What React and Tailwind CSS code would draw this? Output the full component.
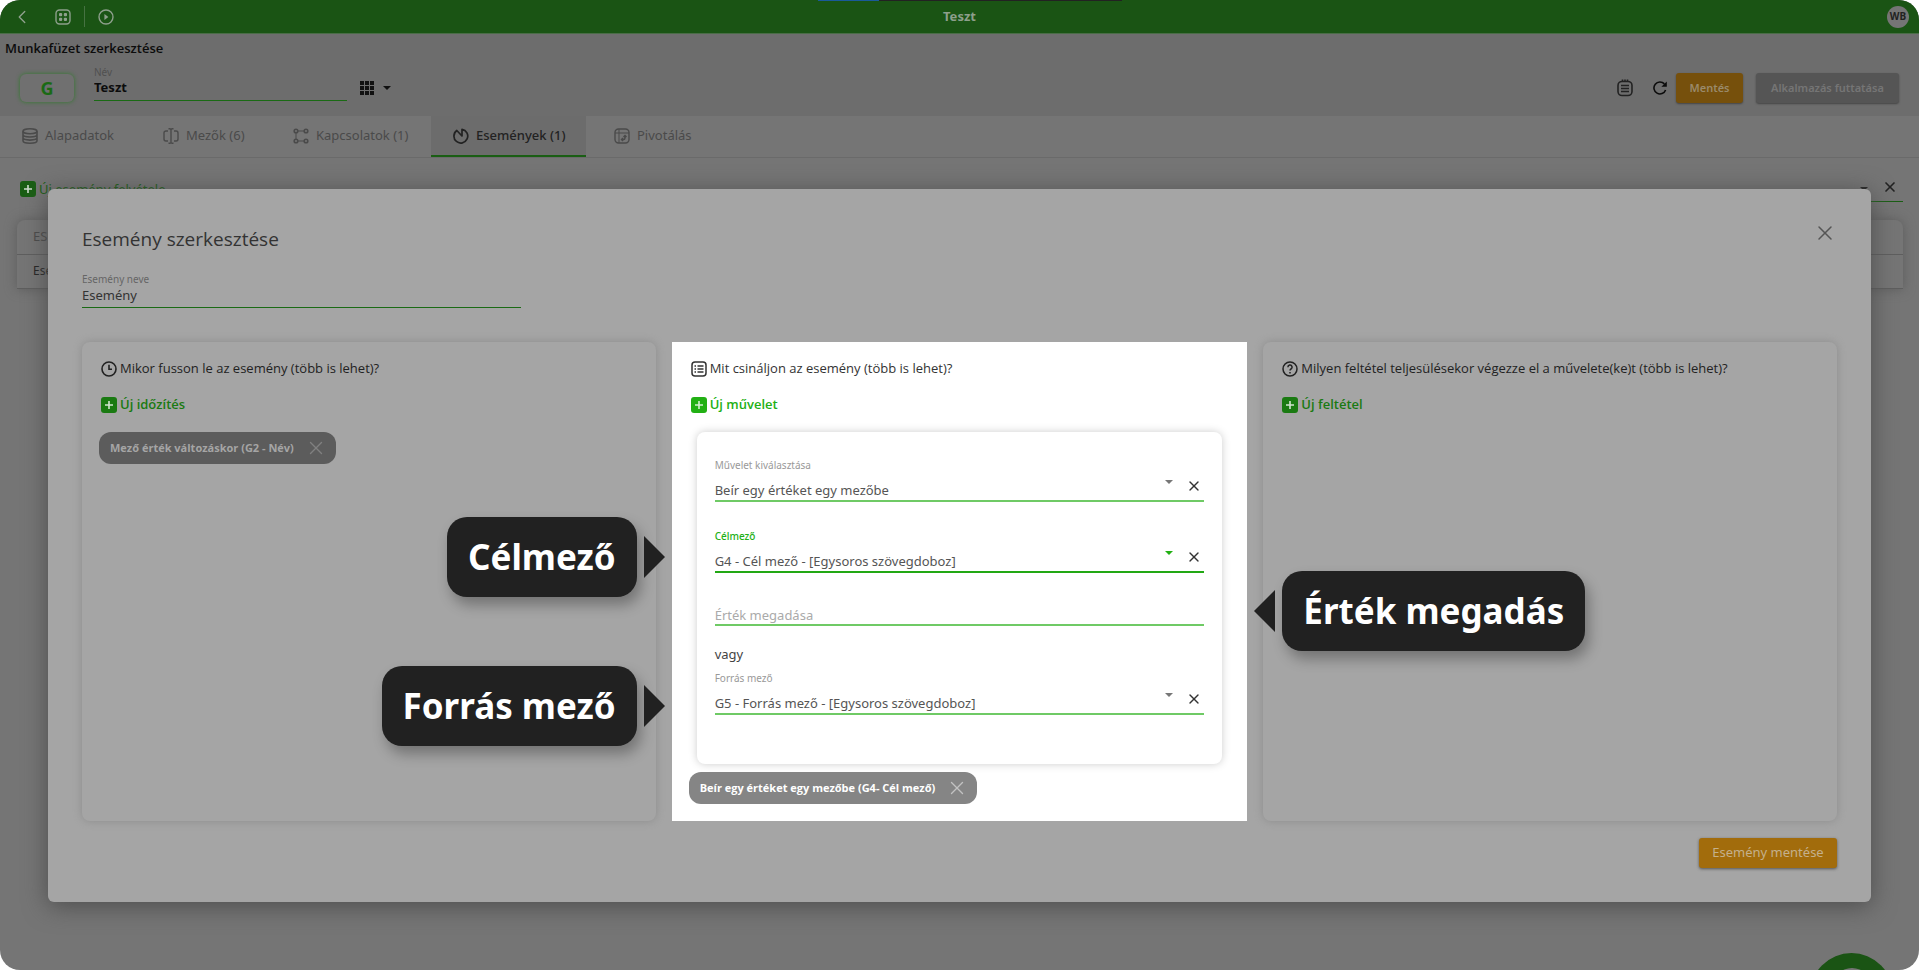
import { ChevronLeft, X } from 'lucide-react'
import clsx from 'clsx'

const BoardIcon = () => (
  <svg width="16" height="16" viewBox="0 0 16 16" fill="none" stroke="currentColor">
    <rect x="1" y="1" width="14" height="14" rx="3.5" strokeWidth="1.4" />
    <g fill="currentColor" stroke="none">
      <rect x="4" y="4" width="3.2" height="3.2" rx="1" />
      <rect x="8.8" y="4" width="3.2" height="3.2" rx="1" />
      <rect x="4" y="8.8" width="3.2" height="3.2" rx="1" />
      <rect x="8.8" y="8.8" width="3.2" height="3.2" rx="1" />
    </g>
  </svg>
)

const PlayIcon = () => (
  <svg width="16" height="16" viewBox="0 0 16 16" fill="none" stroke="currentColor">
    <circle cx="8" cy="8" r="7" strokeWidth="1.4" />
    <path d="M6.4 5l4 3-4 3z" fill="currentColor" stroke="none" />
  </svg>
)

const GridIcon = () => (
  <svg width="14" height="14" viewBox="0 0 14 14" fill="currentColor">
    {[0, 5, 10].map((y) =>
      [0, 5, 10].map((x) => <rect key={`${x}-${y}`} x={x} y={y} width="4" height="4" />)
    )}
  </svg>
)

const Caret = ({ className }) => (
  <svg width="8" height="4" viewBox="0 0 8 4" fill="currentColor" className={clsx('shrink-0', className)}>
    <path d="M0 0h8L4 4z" />
  </svg>
)

const NotepadIcon = () => (
  <svg width="16" height="18" viewBox="0 0 16 18" fill="none" stroke="currentColor" strokeWidth="1.6">
    <rect x="1" y="2.5" width="14" height="14" rx="4" />
    <path d="M4 6.5h8M4 9.5h8M4 12.5h8M5.5 .5v2M8 .5v2M10.5 .5v2" />
  </svg>
)

const RefreshIcon = () => (
  <svg width="14" height="14" viewBox="0 0 14 14" fill="none" stroke="currentColor" strokeWidth="1.6">
    <path d="M12.6 9A6 6 0 1 1 11.4 2.9" />
    <path d="M13.8 .4v5.4H8.4z" fill="currentColor" stroke="none" />
  </svg>
)

const DatabaseIcon = () => (
  <svg width="16" height="16" viewBox="0 0 16 16" fill="none" stroke="currentColor" strokeWidth="1.6">
    <ellipse cx="8" cy="3.3" rx="7" ry="2.5" />
    <path d="M1 3.3v9.4c0 1.4 3 2.5 7 2.5s7-1.1 7-2.5V3.3M1 6.5C1 7.9 4 9 8 9s7-1.1 7-2.5M1 9.6c0 1.4 3 2.5 7 2.5s7-1.1 7-2.5" />
  </svg>
)

const FieldsIcon = () => (
  <svg width="16" height="16" viewBox="0 0 16 16" fill="none" stroke="currentColor" strokeWidth="1.4">
    <path d="M5 3H3a2 2 0 0 0-2 2v6a2 2 0 0 0 2 2h2M11 3h2a2 2 0 0 1 2 2v6a2 2 0 0 1-2 2h-2M8 1v14M5.5 .7H7l1 .8 1-.8h1.5M5.5 15.3H7l1-.8 1 .8h1.5" />
  </svg>
)

const RelationsIcon = () => (
  <svg width="16" height="16" viewBox="0 0 16 16" fill="none" stroke="currentColor" strokeWidth="1.6">
    <circle cx="3" cy="3" r="1.8" />
    <circle cx="13" cy="3" r="1.8" />
    <circle cx="3" cy="13" r="1.8" />
    <circle cx="13" cy="13" r="1.8" />
    <path d="M5 3h6M5 13h6M3 5v6" strokeWidth="1" />
  </svg>
)

const EventIcon = () => (
  <svg width="16" height="16" viewBox="0 0 16 16" fill="none" stroke="currentColor" strokeWidth="1.7" strokeLinejoin="round">
    <path d="M9 8V1.300a6.900 6.900 0 1 1-5.200 1.200z" />
  </svg>
)

const PivotIcon = () => (
  <svg width="16" height="16" viewBox="0 0 16 16" fill="none" stroke="currentColor" strokeWidth="1.4">
    <rect x="1" y="1" width="14" height="14" rx="3.5" />
    <path d="M1 5h14M5 1v14" strokeWidth="1" />
    <path d="M7.5 11.5h2A1.5 1.5 0 0 0 11 10V7.5M9.5 9L11 7.5 12.5 9M9 10l-1.500 1.500L9 13" />
  </svg>
)

const PlusIcon = () => (
  <svg width="16" height="16" viewBox="0 0 16 16" fill="none" className="shrink-0">
    <rect width="16" height="16" rx="3" fill="currentColor" />
    <path d="M8 4v8M4 8h8" stroke="#fff" strokeOpacity="0.8" strokeWidth="1.6" />
  </svg>
)

const ClockIcon = () => (
  <svg width="16" height="16" viewBox="0 0 16 16" fill="none" stroke="currentColor" strokeWidth="1.6">
    <circle cx="8" cy="8" r="7" />
    <path d="M8 3.8V8.3h3" />
  </svg>
)

const ListIcon = () => (
  <svg width="16" height="16" viewBox="0 0 16 16" fill="none" stroke="currentColor" strokeWidth="1.5">
    <rect x="1" y="1" width="14" height="14" rx="3" />
    <path d="M3.5 5H5M6.5 5h6M3.5 8H5M6.5 8h6M3.5 11H5M6.5 11h6" />
  </svg>
)

const QuestionIcon = () => (
  <svg width="16" height="16" viewBox="0 0 16 16" fill="none" stroke="currentColor" strokeWidth="1.5">
    <circle cx="8" cy="8" r="7" />
    <path d="M5.9 6.2a2.1 2.1 0 1 1 3.1 1.8c-.7.4-1 .8-1 1.6M8 11v1.4" />
  </svg>
)

const tabs = [
  { label: 'Alapadatok', icon: DatabaseIcon, width: 'w-[141px]' },
  { label: 'Mezők (6)', icon: FieldsIcon, width: 'w-[130px]' },
  { label: 'Kapcsolatok (1)', icon: RelationsIcon, width: 'w-[160px]' },
  { label: 'Események (1)', icon: EventIcon, width: 'w-[155px]', active: true },
  { label: 'Pivotálás', icon: PivotIcon, width: 'w-[155px]' }
]

const Header = () => (
  <header className="flex h-[34px] items-center border-b border-[#4a6d47] bg-[#1a5414] text-[#8d9f8b]">
    <div className="flex flex-1 items-center">
      <button type="button" aria-label="Vissza" className="ml-[11px] flex w-11">
        <ChevronLeft size={22} strokeWidth={1.5} />
      </button>
      <button type="button" aria-label="Alkalmazások">
        <BoardIcon />
      </button>
      <span className="mx-[13px] h-[21px] w-px bg-[#467242]" />
      <button type="button" aria-label="Futtatás">
        <PlayIcon />
      </button>
    </div>
    <h1 className="text-[13px] font-bold">Teszt</h1>
    <div className="flex flex-1 justify-end">
      <button type="button" className="mr-[10px] h-[22px] w-[22px] rounded-full bg-[#757575] text-[10px] font-bold text-[#222]">
        WB
      </button>
    </div>
  </header>
)

const Toolbar = () => (
  <section className="h-[82px] bg-[#6d6d6d]">
    <h2 className="pt-1 pl-[5px] font-['Open_Sans',sans-serif] text-[13px] leading-5 font-semibold text-[#0c0c0c]">
      Munkafüzet szerkesztése
    </h2>
    <div className="mt-2 flex h-11 items-center px-5">
      <span className="flex h-7 w-[54px] items-center justify-center rounded-md bg-[#707070] text-lg font-bold text-[#1a6a14] shadow-[0_0_4px_#2f7a2a]">
        G
      </span>
      <div className="ml-5 w-[253px] self-start border-b border-[#1a6a14]">
        <label htmlFor="workbook" className="block text-[10px] leading-3 text-[#505050]">
          Név
        </label>
        <input
          id="workbook"
          defaultValue="Teszt"
          className="block h-[22px] w-full pb-1 text-[13px] font-bold text-[#0c0c0c] outline-none"
        />
      </div>
      <button type="button" aria-label="Nézet" className="ml-[13px] flex items-center gap-[9px] text-[#111]">
        <GridIcon />
        <Caret />
      </button>
      <div className="ml-auto flex items-center">
        <button type="button" aria-label="Napló" className="text-[#222]">
          <NotepadIcon />
        </button>
        <button type="button" aria-label="Frissítés" className="mr-[9px] ml-5 text-[#0c0c0c]">
          <RefreshIcon />
        </button>
        <button type="button" className="h-[30px] w-[67px] rounded-[3px] bg-[#76500c] text-[11px] font-semibold text-[#9a8a6a] shadow-[0_1px_2px_#444]">
          Mentés
        </button>
        <button type="button" className="ml-[13px] h-[30px] w-[143px] rounded-[3px] bg-[#555] text-[11px] font-semibold text-[#757575] shadow-[0_1px_2px_#444]">
          Alkalmazás futtatása
        </button>
      </div>
    </div>
  </section>
)

const Tabs = () => (
  <nav className="flex h-[42px] border-b border-[#6a6a6a] bg-[#757575]">
    {tabs.map(({ label, icon: Icon, width, active }) => (
      <button
        key={label}
        type="button"
        className={clsx(
          'flex items-center gap-[7px] border-b-2 pl-[22px] text-[13px] whitespace-nowrap',
          width,
          active ? 'mr-[6px] border-[#1a5e14] bg-[#6c6c6c] font-medium text-[#222]' : 'border-transparent text-[#4a4a4a]'
        )}
      >
        <Icon />
        {label}
      </button>
    ))}
  </nav>
)

const EventTable = () => (
  <section className="pt-[23px] pr-4 pl-[17px]">
    <div className="flex h-[21px] items-start justify-between">
      <button type="button" className="ml-[3px] flex h-4 items-center gap-[3px] text-[13px] leading-4 text-[#1a5e14]">
        <PlusIcon />
        Új esemény felvétele
      </button>
      <div className="flex h-[21px] w-60 items-start justify-end gap-4 border-b border-[#1a5e14] pr-[7px] text-[#222]">
        <Caret className="mt-[6px]" />
        <button type="button" aria-label="Szűrő törlése">
          <X size={16} strokeWidth={2.5} className="-m-0.5" />
        </button>
      </div>
    </div>
    <table className="mt-[18px] w-full rounded-t-lg text-left text-[13px] shadow-[0_0_12px_#5c5c5c]">
      <thead>
        <tr className="h-[34px] border-b border-[#5e5e5e] text-[#4a4a4a]">
          <th className="pl-4 font-normal">ESEMÉNY NEVE</th>
        </tr>
      </thead>
      <tbody>
        <tr className="h-[34px] border-b border-[#5e5e5e] text-xs text-[#222]">
          <td className="pl-4">Esemény</td>
        </tr>
      </tbody>
    </table>
  </section>
)

const SelectField = ({ id, label, value, focused, line }) => (
  <div className={clsx('border-b-2', line)}>
    <label
      htmlFor={id}
      className={clsx('block text-[10px] leading-[14px]', focused ? 'font-medium text-[#22b014]' : 'text-[#999]')}
    >
      {label}
    </label>
    <div className="mt-2 flex h-5 items-start pr-1">
      <select id={id} className="h-5 flex-1 appearance-none text-[13px] leading-5 text-[#555] outline-none">
        <option>{value}</option>
      </select>
      <Caret className={focused ? 'text-[#22b014]' : 'text-[#777]'} />
      <button type="button" aria-label={`${label} törlése`} className="ml-[15px] text-[#333]">
        <X size={16} strokeWidth={2} className="-m-0.5" />
      </button>
    </div>
  </div>
)

const Chip = ({ children, className }) => (
  <span
    className={clsx(
      "flex h-8 w-fit items-center gap-[13px] rounded-xl px-[11px] font-['Open_Sans',sans-serif] text-[11px] font-bold",
      className
    )}
  >
    {children}
    <button type="button" aria-label="Eltávolítás" className="opacity-50">
      <X size={22} strokeWidth={1.5} className="-mx-0.5" />
    </button>
  </span>
)

const Column = ({ icon: Icon, title, action, highlighted, children }) => (
  <section
    className={clsx(
      'relative flex min-h-[479px] flex-col p-[17px]',
      highlighted ? '-mx-px bg-white' : 'rounded-lg shadow-[0_0_8px_#8c8c8c]'
    )}
  >
    <h3
      className={clsx(
        "flex h-5 items-center gap-[3px] pl-0.5 font-['Open_Sans',sans-serif] text-[13px] font-medium whitespace-nowrap",
        highlighted ? 'text-[#333]' : 'text-[#222]'
      )}
    >
      <Icon />
      {title}
    </h3>
    <button
      type="button"
      className={clsx(
        "mt-4 mb-[17px] flex h-5 items-center gap-[3px] pl-0.5 font-['Open_Sans',sans-serif] text-[13px] font-semibold",
        highlighted ? 'text-[#22b014]' : 'text-[#1a7a12]'
      )}
    >
      <PlusIcon />
      {action}
    </button>
    {children}
  </section>
)

const Callout = ({ children, side, className }) => (
  <div
    className={clsx(
      'absolute z-10 flex items-center gap-[7px] whitespace-nowrap',
      side === 'left' ? 'right-full mr-[7px]' : 'left-full ml-[7px] flex-row-reverse',
      className
    )}
  >
    <span className="flex h-20 items-center rounded-[20px] bg-[#212121] px-[21px] text-[35px] font-bold text-white shadow-[4px_8px_14px_rgba(0,0,0,0.3)]">
      {children}
    </span>
    <svg width="21" height="42" viewBox="0 0 21 42" fill="#212121">
      <path d={side === 'left' ? 'M0 0l21 21L0 42z' : 'M21 0L0 21l21 21z'} />
    </svg>
  </div>
)

const EventDialog = () => (
  <div
    role="dialog"
    aria-label="Esemény szerkesztése"
    className="absolute inset-x-12 top-[189px] rounded-md bg-[#a5a5a5] p-[34px] shadow-[0_4px_24px_#4d4d4d]"
  >
    <div className="flex items-start justify-between">
      <h2 className="font-['Open_Sans',sans-serif] text-[19px] leading-8 font-medium text-[#333]">
        Esemény szerkesztése
      </h2>
      <button type="button" aria-label="Bezárás" className="text-[#555]">
        <X size={24} strokeWidth={1.5} className="-mt-0.5" />
      </button>
    </div>
    <div className="mt-[17px] w-1/4 border-b border-[#1a6a14]">
      <label htmlFor="event-name" className="block text-[10px] leading-[14px] text-[#666]">
        Esemény neve
      </label>
      <input
        id="event-name"
        defaultValue="Esemény"
        className="block h-[21px] w-full pb-[3px] text-[13px] text-[#333] outline-none"
      />
    </div>

    <div className="mt-[34px] grid grid-cols-3 gap-[17px]">
      <Column icon={ClockIcon} title="Mikor fusson le az esemény (több is lehet)?" action="Új időzítés">
        <Chip className="bg-[#5c5c5c] text-[#a5a5a5]">Mező érték változáskor (G2 - Név)</Chip>
      </Column>

      <Column
        icon={ListIcon}
        title="Mit csináljon az esemény (több is lehet)?"
        action="Új művelet"
        highlighted
      >
        <div className="mx-2 rounded-lg px-[18px] pt-[26px] pb-[49px] shadow-[0_0_8px_#ccc]">
          <SelectField
            id="operation"
            label="Művelet kiválasztása"
            value="Beír egy értéket egy mezőbe"
            line="border-[#6fca65]"
          />
          <div className="mt-[27px]">
            <SelectField
              id="target"
              label="Célmező"
              value="G4 - Cél mező - [Egysoros szövegdoboz]"
              focused
              line="border-[#22a814]"
            />
          </div>
          <input
            aria-label="Érték megadása"
            placeholder="Érték megadása"
            className="mt-[33px] block h-5 w-full border-b-2 border-[#6fca65] text-[13px] outline-none placeholder:text-[#aaa]"
          />
          <p className="mt-[18px] mb-[7px] text-[13px] leading-5 text-[#444]">vagy</p>
          <SelectField
            id="source"
            label="Forrás mező"
            value="G5 - Forrás mező - [Egysoros szövegdoboz]"
            line="border-[#6fca65]"
          />
        </div>
        <Chip className="mt-2 bg-[#858585] text-white">Beír egy értéket egy mezőbe (G4- Cél mező)</Chip>

        <Callout side="left" className="top-[175px]">Célmező</Callout>
        <Callout side="left" className="top-[324px]">Forrás mező</Callout>
        <Callout side="right" className="top-[229px]">Érték megadás</Callout>
      </Column>

      <Column
        icon={QuestionIcon}
        title="Milyen feltétel teljesülésekor végezze el a művelete(ke)t (több is lehet)?"
        action="Új feltétel"
      />
    </div>

    <div className="mt-[17px] flex justify-end">
      <button type="button" className="h-[30px] w-[138px] rounded-[3px] bg-[#a26c0c] text-[13px] text-[#c4b08c] shadow-[0_1px_3px_#555]">
        Esemény mentése
      </button>
    </div>
  </div>
)

const App = () => (
  <div className="relative min-h-screen overflow-hidden rounded-[20px] bg-[#757575] font-['Noto_Sans',sans-serif]">
    <Header />
    <Toolbar />
    <Tabs />
    <EventTable />
    <EventDialog />

    {/* Ablakfogantyú a felső élen */}
    <div className="absolute top-0 left-1/2 -ml-[142px] flex h-px w-[304px]">
      <span className="w-[61px] bg-[#1a5a9a]" />
      <span className="flex-1 bg-[#222]" />
    </div>

    <button
      type="button"
      aria-label="Segítség"
      className="absolute right-[26px] -bottom-[66px] flex h-[83px] w-[83px] justify-center rounded-full bg-[#1a5414] pt-[15px]"
    >
      <span className="h-10 w-10 rounded-full bg-[#757575]" />
    </button>
  </div>
)

export default App
